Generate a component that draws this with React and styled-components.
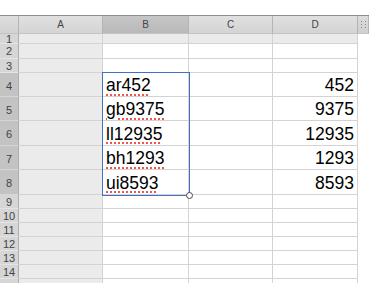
import React from "react";
import styled, { createGlobalStyle } from "styled-components";

const GlobalStyle = createGlobalStyle`
  html, body {
    margin: 0;
    background: #ffffff;
    font-family: "Liberation Sans", Arial, sans-serif;
  }
`;

const columns = [
  { key: "A", width: 84 },
  { key: "B", width: 86 },
  { key: "C", width: 84 },
  { key: "D", width: 85 }
];

const rows = [
  { n: 1, h: 10 },
  { n: 2, h: 15 },
  { n: 3, h: 14 },
  { n: 4, h: 24, b: "ar452", d: "452" },
  { n: 5, h: 24, b: "gb9375", d: "9375" },
  { n: 6, h: 25, b: "ll12935", d: "12935" },
  { n: 7, h: 24, b: "bh1293", d: "1293" },
  { n: 8, h: 25, b: "ui8593", d: "8593" },
  { n: 9, h: 14 },
  { n: 10, h: 14 },
  { n: 11, h: 14 },
  { n: 12, h: 14 },
  { n: 13, h: 14 },
  { n: 14, h: 14 },
  { n: "", h: 14 }
];

const Page = styled.div`
  padding-top: 15px;
  height: 283px;
  overflow: hidden;
  box-sizing: border-box;
`;

const Sheet = styled.div`
  position: relative;
  width: 369px;
`;

const HeaderRow = styled.div`
  display: flex;
  height: 19px;
  border-top: 1px solid #8d8d8d;
  box-sizing: border-box;
`;

const Corner = styled.div`
  width: 19px;
  box-sizing: border-box;
  border-right: 1px solid #b4b4b4;
  border-bottom: 1px solid #c4c4c4;
  background: linear-gradient(#dedede, #d2d2d2);
`;

const HeadCell = styled.div`
  width: ${p => p.$w}px;
  box-sizing: border-box;
  display: flex;
  align-items: center;
  justify-content: center;
  font-size: 10px;
  color: #444444;
  border-right: 1px solid #b4b4b4;
  border-bottom: 1px solid #c4c4c4;
  background: ${p =>
    p.$active
      ? "linear-gradient(#c6c6c6, #b9b9b9)"
      : "linear-gradient(#e0e0e0, #d4d4d4)"};
`;

const Grip = styled.div`
  width: 11px;
  box-sizing: border-box;
  border-right: 1px solid #b4b4b4;
  border-bottom: 1px solid #c4c4c4;
  background: linear-gradient(#dcdcdc, #d0d0d0);
  display: flex;
  align-items: center;
  justify-content: center;
`;

const Row = styled.div`
  display: flex;
  height: ${p => p.$h}px;
`;

const RowHead = styled.div`
  width: 19px;
  box-sizing: border-box;
  display: flex;
  align-items: center;
  justify-content: center;
  font-size: 11px;
  color: #444444;
  border-right: 1px solid #aeaeae;
  border-bottom: 1px solid ${p => (p.$active ? "#d6d6d6" : "#e4e4e4")};
  background: ${p => (p.$active ? "#c3c3c3" : "#d6d6d6")};
  padding-top: ${p => (p.$tall ? 2 : 0)}px;
`;

const Cell = styled.div`
  width: ${p => p.$w}px;
  box-sizing: border-box;
  display: flex;
  align-items: center;
  justify-content: ${p => (p.$right ? "flex-end" : "flex-start")};
  padding: 2px 3px 0 3px;
  border-right: 1px solid #d3d3d3;
  border-bottom: 1px solid #d3d3d3;
  background: ${p => (p.$shade ? "#ebebeb" : "#ffffff")};
  font-size: 17.5px;
  color: #000;
  white-space: nowrap;
`;

const Spell = styled.span`
  text-decoration: underline dotted #f0554c;
  text-decoration-thickness: 2px;
  text-underline-offset: 3px;
`;

const Selection = styled.div`
  position: absolute;
  left: 102px;
  top: 57px;
  width: 88px;
  height: 124px;
  box-sizing: border-box;
  border: 1px solid #3d72c8;
  pointer-events: none;
`;

const Handle = styled.div`
  position: absolute;
  right: -4px;
  bottom: -4px;
  width: 7px;
  height: 7px;
  box-sizing: border-box;
  border-radius: 50%;
  border: 1px solid #4a4a4a;
  background: #ffffff;
`;

const GripDots = () => (
  <svg width="5" height="7" viewBox="0 0 5 7">
    {[0, 3, 6].map(y =>
      [0, 4].map(x => (
        <rect key={`${x}-${y}`} x={x} y={y} width="1" height="1" fill="#8a8a8a" />
      ))
    )}
  </svg>
);

export default function App() {
  return (
    <Page>
      <GlobalStyle />
      <Sheet>
        <HeaderRow>
          <Corner />
          {columns.map(c => (
            <HeadCell key={c.key} $w={c.width} $active={c.key === "B"}>
              {c.key}
            </HeadCell>
          ))}
          <Grip>
            <GripDots />
          </Grip>
        </HeaderRow>
        {rows.map((r, i) => {
          const active = !!r.b;
          return (
            <Row key={i} $h={r.h}>
              <RowHead $active={active} $tall={active}>
                {r.n}
              </RowHead>
              {columns.map(c => (
                <Cell
                  key={c.key}
                  $w={c.width}
                  $shade={c.key === "A" || r.n === 1}
                  $right={c.key === "D"}
                >
                  {c.key === "B" && r.b && <Spell>{r.b}</Spell>}
                  {c.key === "D" && r.d}
                </Cell>
              ))}
            </Row>
          );
        })}
        <Selection>
          <Handle />
        </Selection>
      </Sheet>
    </Page>
  );
}
